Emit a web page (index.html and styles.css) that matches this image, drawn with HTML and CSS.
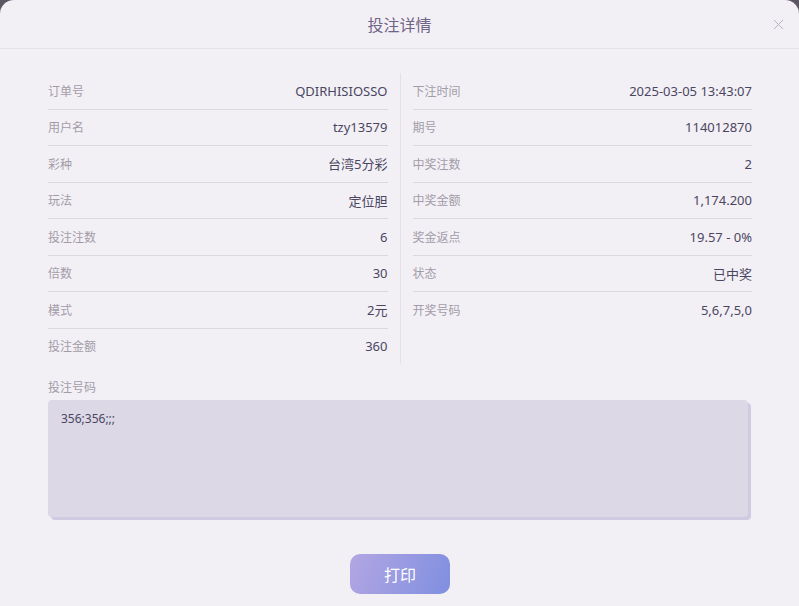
FILE: index.html
```html
<!DOCTYPE html>
<html lang="zh-CN">
<head>
    <meta charset="UTF-8">
    <meta name="viewport" content="width=device-width, initial-scale=1.0">
    <title>投注详情</title>
    <link rel="stylesheet" href="styles.css">
</head>
<body>
    <div class="modal">
        <div class="modal-header">
            <span class="modal-title">投注详情</span>
            <span class="modal-close">
                <svg width="11" height="11" viewBox="0 0 11 11"><path d="M1 1L10 10M10 1L1 10" stroke="#b9b3c0" stroke-width="1" fill="none"/></svg>
            </span>
        </div>
        <div class="modal-body">
            <div class="info-grid">
                <div class="info-col info-col-left">
                    <div class="info-row"><span class="label">订单号</span><span class="value">QDIRHISIOSSO</span></div>
                    <div class="info-row"><span class="label">用户名</span><span class="value">tzy13579</span></div>
                    <div class="info-row"><span class="label">彩种</span><span class="value">台湾5分彩</span></div>
                    <div class="info-row"><span class="label">玩法</span><span class="value">定位胆</span></div>
                    <div class="info-row"><span class="label">投注注数</span><span class="value">6</span></div>
                    <div class="info-row"><span class="label">倍数</span><span class="value">30</span></div>
                    <div class="info-row"><span class="label">模式</span><span class="value">2元</span></div>
                    <div class="info-row"><span class="label">投注金额</span><span class="value">360</span></div>
                </div>
                <div class="info-col info-col-right">
                    <div class="info-row"><span class="label">下注时间</span><span class="value">2025-03-05 13:43:07</span></div>
                    <div class="info-row"><span class="label">期号</span><span class="value">114012870</span></div>
                    <div class="info-row"><span class="label">中奖注数</span><span class="value">2</span></div>
                    <div class="info-row"><span class="label">中奖金额</span><span class="value">1,174.200</span></div>
                    <div class="info-row"><span class="label">奖金返点</span><span class="value">19.57 - 0%</span></div>
                    <div class="info-row"><span class="label">状态</span><span class="value">已中奖</span></div>
                    <div class="info-row"><span class="label">开奖号码</span><span class="value">5,6,7,5,0</span></div>
                </div>
            </div>
            <div class="numbers">
                <div class="label numbers-label">投注号码</div>
                <div class="numbers-box">356;356;;;</div>
            </div>
            <div class="actions">
                <button class="btn-print">打印</button>
            </div>
        </div>
    </div>
</body>
</html>
```

FILE: styles.css
```css
body {
    margin: 0;
    background-color: #5b5661;
    font-family: "Noto Sans", "Noto Sans CJK SC", sans-serif;
}
.modal {
    background: #f3f0f5;
    border-radius: 14px 14px 0 0;
    height: 100vh;
    overflow: hidden;
}
.modal-header {
    height: 48px;
    border-bottom: 1px solid #e6e2ea;
    display: flex;
    align-items: center;
    justify-content: center;
    position: relative;
}
.modal-title {
    font-size: 16px;
    color: #6f6387;
}
.modal-close {
    position: absolute;
    right: 15px;
    top: 19px;
    line-height: 0;
}
.modal-body {
    padding: 24px 47px 0 48px;
}
.info-grid {
    display: flex;
}
.info-col {
    width: 50%;
}
.info-col-left {
    padding-right: 12px;
    border-right: 1px solid #e4e0e8;
}
.info-col-right {
    padding-left: 12px;
}
.info-row {
    display: flex;
    justify-content: space-between;
    align-items: center;
    height: 35.5px;
    border-bottom: 1px solid #dcd8e0;
}
.info-row:last-child {
    border-bottom: none;
}
.label {
    font-size: 12px;
    color: #a29ca9;
}
.value {
    font-size: 13px;
    color: #4a4662;
}
.numbers {
    margin-top: 14px;
}
.numbers-label {
    line-height: 20px;
    margin-bottom: 2px;
}
.numbers-box {
    height: 97px;
    margin-right: 4px;
    padding: 10px 13px;
    background: #dcd8e6;
    border-radius: 4px;
    box-shadow: 3px 3px 0 #d0cbe0;
    font-size: 12px;
    color: #4a4662;
}
.actions {
    display: flex;
    justify-content: center;
    margin-top: 37px;
}
.btn-print {
    width: 100px;
    height: 40px;
    border: none;
    border-radius: 10px;
    background: linear-gradient(110deg, #b3a6e3, #7f8fe0);
    color: white;
    font-family: "Noto Sans CJK SC", sans-serif;
    font-size: 16px;
    cursor: pointer;
}
```
